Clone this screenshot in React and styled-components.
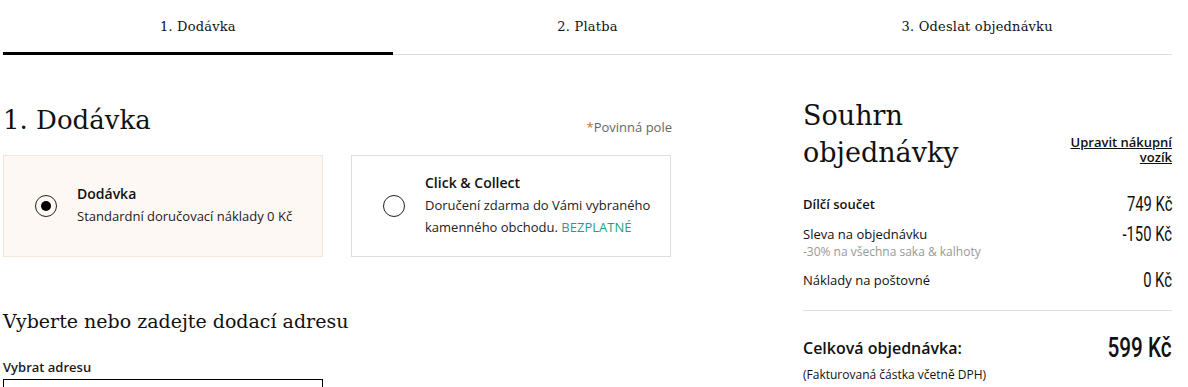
import React from 'react'
import styled, { createGlobalStyle } from 'styled-components'

const GlobalStyle = createGlobalStyle`
  html, body {
    margin: 0;
    padding: 0;
    background: #fff;
    color: #1a1a1a;
    font-family: 'Open Sans', 'Noto Sans', sans-serif;
  }
`

const slab = `'DejaVu Serif', 'Liberation Serif', serif`

const Page = styled.div`
  width: 1169px;
  margin-left: 3px;
`

const Steps = styled.nav`
  display: grid;
  grid-template-columns: repeat(3, 1fr);
  border-bottom: 1px solid #dcdcdc;
`

const Step = styled.div`
  height: 55px;
  display: flex;
  align-items: center;
  justify-content: center;
  font-family: ${slab};
  font-size: 13px;
  letter-spacing: 0.2px;
  color: #111;
  box-sizing: border-box;
  border-bottom: 3px solid ${p => (p.$active ? '#000' : 'transparent')};
  margin-bottom: -1px;
`

const Main = styled.div`
  display: grid;
  grid-template-columns: 669px 369px;
  justify-content: space-between;
  padding-top: 44px;
`

const Left = styled.section``

const HeadRow = styled.div`
  display: flex;
  justify-content: space-between;
  align-items: flex-end;
  height: 40px;
`

const H1 = styled.h1`
  margin: 0;
  font-family: ${slab};
  font-weight: 300;
  font-size: 26px;
  line-height: 38px;
  color: #111;
`

const Required = styled.span`
  font-size: 13px;
  color: #666;
  margin-bottom: 3px;
  &::before {
    content: '*';
    color: #c0703f;
  }
`

const Options = styled.div`
  display: flex;
  gap: 28px;
  margin-top: 16px;
`

const Option = styled.label`
  width: 320px;
  height: 102px;
  box-sizing: border-box;
  display: flex;
  align-items: center;
  gap: 20px;
  padding: 0 0 0 31px;
  background: ${p => (p.$checked ? '#fdf8f4' : '#fff')};
  border: 1px solid ${p => (p.$checked ? '#f2e7db' : '#dedede')};
  font-size: 13px;
  line-height: 22px;
`

const Radio = styled.span`
  flex: none;
  width: 22px;
  height: 22px;
  border: 1.5px solid #222;
  border-radius: 50%;
  box-sizing: border-box;
  display: flex;
  align-items: center;
  justify-content: center;
  &::after {
    content: '';
    width: 10px;
    height: 10px;
    border-radius: 50%;
    background: #000;
    display: ${p => (p.$checked ? 'block' : 'none')};
  }
`

const OptionText = styled.div`
  color: #222;
  margin-top: -2px;
`

const OptionTitle = styled.div`
  font-weight: 600;
  font-size: 14px;
  color: #111;
`

const Free = styled.span`
  color: #1e9e8a;
`

const H2 = styled.h2`
  margin: 50px 0 0;
  font-family: ${slab};
  font-weight: 300;
  font-size: 19px;
  line-height: 28px;
  color: #111;
`

const FieldLabel = styled.div`
  margin-top: 23px;
  font-size: 13px;
  font-weight: 600;
  line-height: 18px;
`

const Select = styled.div`
  margin-top: 3px;
  width: 320px;
  height: 40px;
  border: 1px solid #000;
  box-sizing: border-box;
`

const Summary = styled.aside``

const SummaryHead = styled.div`
  display: flex;
  justify-content: space-between;
  align-items: flex-end;
  margin-top: -2px;
`

const SummaryTitle = styled.h2`
  margin: 0;
  font-family: ${slab};
  font-weight: 300;
  font-size: 27px;
  line-height: 37px;
  color: #111;
`

const EditLink = styled.a`
  font-size: 13px;
  font-weight: 600;
  line-height: 15px;
  color: #111;
  text-align: right;
  text-decoration: underline;
  margin-bottom: 6px;
`

const Rows = styled.div`
  margin-top: 23px;
  display: flex;
  flex-direction: column;
  gap: 6px;
  padding-bottom: 16px;
  border-bottom: 1px solid #dedede;
`

const Row = styled.div`
  display: flex;
  justify-content: space-between;
  align-items: flex-start;
  min-height: ${p => (p.$tall ? '40px' : '24px')};
`

const RowLabel = styled.div`
  font-size: 13px;
  line-height: 20px;
  font-weight: ${p => (p.$bold ? 600 : 400)};
  color: #111;
`

const Note = styled.div`
  font-size: 12px;
  line-height: 15px;
  color: #999;
`

const Price = styled.div`
  font-family: 'Roboto', 'Liberation Sans', sans-serif;
  font-size: ${p => (p.$big ? '28px' : '20px')};
  font-weight: ${p => (p.$big ? 500 : 400)};
  line-height: ${p => (p.$big ? '30px' : '20px')};
  color: #111;
  transform: scaleX(0.74);
  transform-origin: right center;
  white-space: nowrap;
`

const Total = styled.div`
  margin-top: 22px;
  display: flex;
  justify-content: space-between;
  align-items: center;
`

const TotalLabel = styled.div`
  font-size: 16px;
  font-weight: 600;
  color: #111;
`

const VatNote = styled.div`
  margin-top: 3px;
  font-size: 12px;
  color: #111;
`

export default function App() {
  return (
    <Page>
      <GlobalStyle />
      <Steps>
        <Step $active>1. Dodávka</Step>
        <Step>2. Platba</Step>
        <Step>3. Odeslat objednávku</Step>
      </Steps>
      <Main>
        <Left>
          <HeadRow>
            <H1>1. Dodávka</H1>
            <Required>Povinná pole</Required>
          </HeadRow>
          <Options>
            <Option $checked>
              <Radio $checked />
              <OptionText>
                <OptionTitle>Dodávka</OptionTitle>
                Standardní doručovací náklady 0 Kč
              </OptionText>
            </Option>
            <Option>
              <Radio />
              <OptionText>
                <OptionTitle>Click &amp; Collect</OptionTitle>
                Doručení zdarma do Vámi vybraného kamenného obchodu. <Free>BEZPLATNÉ</Free>
              </OptionText>
            </Option>
          </Options>
          <H2>Vyberte nebo zadejte dodací adresu</H2>
          <FieldLabel>Vybrat adresu</FieldLabel>
          <Select />
        </Left>
        <Summary>
          <SummaryHead>
            <SummaryTitle>Souhrn<br />objednávky</SummaryTitle>
            <EditLink href="#">Upravit nákupní<br />vozík</EditLink>
          </SummaryHead>
          <Rows>
            <Row>
              <RowLabel $bold>Dílčí součet</RowLabel>
              <Price>749 Kč</Price>
            </Row>
            <Row $tall>
              <div>
                <RowLabel>Sleva na objednávku</RowLabel>
                <Note>-30% na všechna saka &amp; kalhoty</Note>
              </div>
              <Price>-150 Kč</Price>
            </Row>
            <Row>
              <RowLabel>Náklady na poštovné</RowLabel>
              <Price>0 Kč</Price>
            </Row>
          </Rows>
          <Total>
            <TotalLabel>Celková objednávka:</TotalLabel>
            <Price $big>599 Kč</Price>
          </Total>
          <VatNote>(Fakturovaná částka včetně DPH)</VatNote>
        </Summary>
      </Main>
    </Page>
  )
}
